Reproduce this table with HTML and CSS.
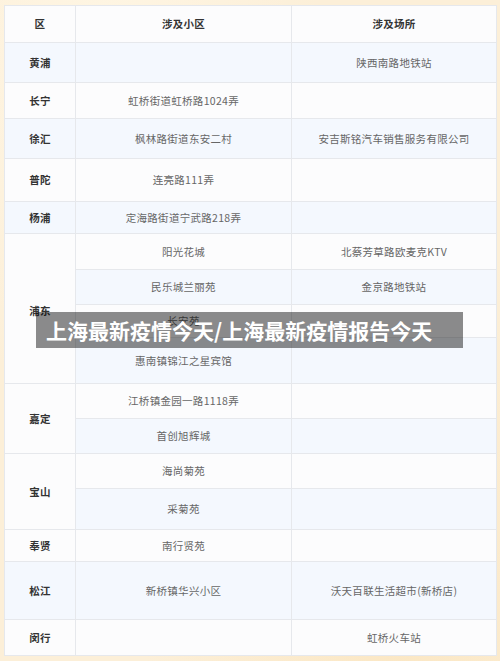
FILE: index.html
```html
<!DOCTYPE html>
<html lang="zh-CN">
<head>
<meta charset="utf-8">
<title>上海最新疫情今天</title>
<link rel="stylesheet" href="styles.css">
</head>
<body>
<div class="page">
  <table class="risk">
    <colgroup>
      <col class="c1"><col class="c2"><col class="c3">
    </colgroup>
    <thead>
      <tr class="h-37"><th>区</th><th>涉及小区</th><th>涉及场所</th></tr>
    </thead>
    <tbody>
      <tr class="blue h-40"><td class="region">黄浦</td><td></td><td>陕西南路地铁站</td></tr>
      <tr class="h-36"><td class="region">长宁</td><td>虹桥街道虹桥路1024弄</td><td></td></tr>
      <tr class="blue h-40"><td class="region">徐汇</td><td>枫林路街道东安二村</td><td>安吉斯铭汽车销售服务有限公司</td></tr>
      <tr class="h-43"><td class="region">普陀</td><td>连亮路111弄</td><td></td></tr>
      <tr class="blue h-32"><td class="region">杨浦</td><td>定海路街道宁武路218弄</td><td></td></tr>
      <tr class="h-36"><td class="region white lowered" rowspan="4">浦东</td><td>阳光花城</td><td>北蔡芳草路欧麦克KTV</td></tr>
      <tr class="blue h-35"><td>民乐城兰丽苑</td><td>金京路地铁站</td></tr>
      <tr class="h-33"><td>长安苑</td><td></td></tr>
      <tr class="blue h-47"><td>惠南镇锦江之星宾馆</td><td></td></tr>
      <tr class="h-35"><td class="region white" rowspan="2">嘉定</td><td>江桥镇金园一路1118弄</td><td></td></tr>
      <tr class="blue h-35"><td>首创旭辉城</td><td></td></tr>
      <tr class="h-35"><td class="region white" rowspan="2">宝山</td><td>海尚菊苑</td><td></td></tr>
      <tr class="blue h-41"><td>采菊苑</td><td></td></tr>
      <tr class="h-32"><td class="region">奉贤</td><td>南行贤苑</td><td></td></tr>
      <tr class="blue h-58"><td class="region">松江</td><td>新桥镇华兴小区</td><td>沃天百联生活超市(新桥店)</td></tr>
      <tr class="h-36"><td class="region">闵行</td><td></td><td>虹桥火车站</td></tr>
    </tbody>
  </table>
  <div class="banner">上海最新疫情今天/上海最新疫情报告今天</div>
</div>
</body>
</html>
```
FILE: styles.css
```css
html, body {
  margin: 0;
  padding: 0;
}
body {
  width: 500px;
  height: 661px;
  overflow: hidden;
  background:
    radial-gradient(ellipse at 20% 10%, #fff6e4 0%, rgba(255,246,228,0) 40%),
    radial-gradient(ellipse at 80% 95%, #fbe7c4 0%, rgba(251,231,196,0) 45%),
    #fcefd8;
  font-family: "Noto Sans CJK SC", "Noto Sans", sans-serif;
}
.page {
  position: relative;
  padding: 5px 4px 0 4px;
}
.risk {
  width: 492px;
  border-collapse: collapse;
  table-layout: fixed;
  background: #fcfcfd;
  border: 1px solid #e7e8ec;
}
.c1 { width: 71px; }
.c2 { width: 216px; }
.c3 { width: 205px; }
.risk th, .risk td {
  border: 1px solid #e6e8ec;
  padding: 0;
  text-align: center;
  vertical-align: middle;
  font-size: 10.5px;
  line-height: 14px;
  color: #666;
  letter-spacing: 0.3px;
}
.risk th {
  font-weight: 700;
  color: #333;
}
.risk td.region {
  font-weight: 700;
  color: #333;
}
.risk td.lowered {
  padding-top: 4px;
}
.blue td { background: #f4f8fe; }
td.region.white { background: #fcfcfd; }
.h-32 { height: 32px; }
.h-33 { height: 33px; }
.h-35 { height: 35px; }
.h-36 { height: 36px; }
.h-37 { height: 37px; }
.h-40 { height: 40px; }
.h-41 { height: 41px; }
.h-43 { height: 43px; }
.h-47 { height: 46px; }
.h-58 { height: 58px; }
.banner {
  position: absolute;
  left: 36px;
  top: 312px;
  width: 427px;
  height: 36px;
  box-sizing: border-box;
  padding-left: 10px;
  background: rgba(0, 0, 0, 0.45);
  color: #fff;
  font-weight: 700;
  font-size: 21px;
  line-height: 36px;
  white-space: nowrap;
}
```
